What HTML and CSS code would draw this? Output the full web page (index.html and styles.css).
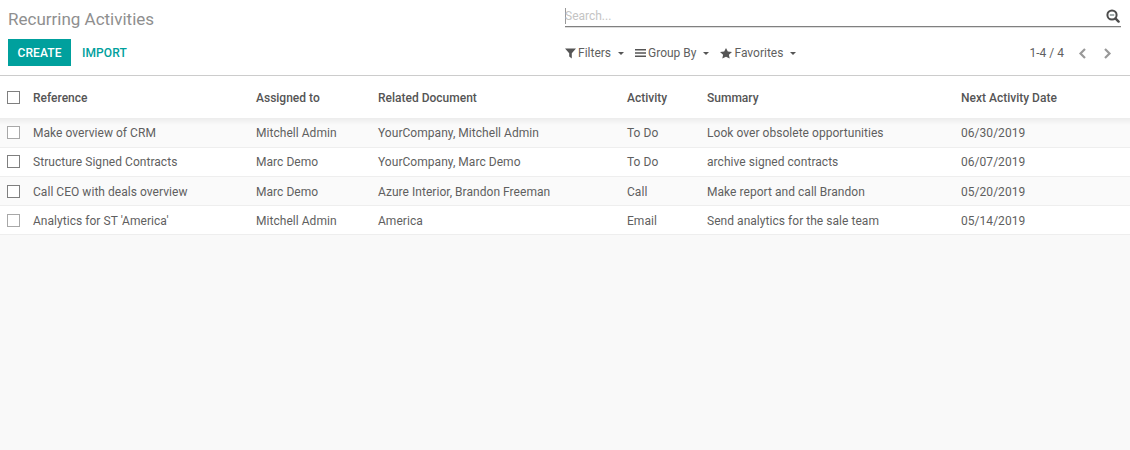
FILE: index.html
```html
<!DOCTYPE html>
<html>
  <head>
    <title>Recurring Activities</title>
    <link rel="stylesheet" href="styles.css">
  </head>
  <body>
    <div class="control-panel">
      <div class="cp-left">
        <h1 class="title">Recurring Activities</h1>
        <div class="buttons">
          <button class="btn-create">CREATE</button>
          <button class="btn-import">IMPORT</button>
        </div>
      </div>
      <div class="cp-right">
        <div class="search">
          <span class="search-input">Search...</span>
          <svg class="search-icon" width="14" height="14" viewBox="0 0 14 14">
            <circle cx="6" cy="6" r="4.6" fill="none" stroke="#4c4c4c" stroke-width="2"/>
            <path d="M3.8 6h4.4" stroke="#7a8a8a" stroke-width="1.4"/>
            <path d="M9.4 9.4l3.2 3.2" stroke="#4c4c4c" stroke-width="2.4" stroke-linecap="round"/>
          </svg>
        </div>
        <div class="tools">
          <div class="filters">
            <span class="filter">
              <svg width="11" height="11" viewBox="0 0 11 11"><path d="M0 0.500h11L6.800 5.300V10.500L4.200 8.500V5.300z" fill="#555"/></svg>
              Filters<i class="caret"></i>
            </span>
            <span class="filter">
              <svg width="11" height="11" viewBox="0 0 11 11"><path d="M0 1h11v1.600H0zM0 4.200h11v1.600H0zM0 7.400h11v1.600H0z" fill="#555"/></svg>
              Group By<i class="caret"></i>
            </span>
            <span class="filter">
              <svg width="12" height="11" viewBox="0 0 12 11"><path d="M6 0l1.800 3.500 4.200.5-3.100 2.700.8 3.900L6 8.700 2.300 10.600l.8-3.900L0 4l4.200-.5z" fill="#555"/></svg>
              Favorites<i class="caret"></i>
            </span>
          </div>
          <div class="pager">
            <span class="pager-text">1-4 / 4</span>
            <svg width="9" height="12" viewBox="0 0 9 12"><path d="M7 1L2.500 5.500 7 10" fill="none" stroke="#999" stroke-width="2.200"/></svg>
            <svg width="9" height="12" viewBox="0 0 9 12"><path d="M2 1L6.500 5.500 2 10" fill="none" stroke="#999" stroke-width="2.200"/></svg>
          </div>
        </div>
      </div>
    </div>

    <table class="list">
      <thead>
        <tr>
          <th class="col-check"><span class="check"></span></th>
          <th class="col-ref">Reference</th>
          <th class="col-user">Assigned to</th>
          <th class="col-doc">Related Document</th>
          <th class="col-act">Activity</th>
          <th class="col-sum">Summary</th>
          <th>Next Activity Date</th>
        </tr>
      </thead>
      <tbody>
        <tr>
          <td><span class="check check-light"></span></td>
          <td>Make overview of CRM</td>
          <td>Mitchell Admin</td>
          <td>YourCompany, Mitchell Admin</td>
          <td>To Do</td>
          <td>Look over obsolete opportunities</td>
          <td>06/30/2019</td>
        </tr>
        <tr>
          <td><span class="check"></span></td>
          <td>Structure Signed Contracts</td>
          <td>Marc Demo</td>
          <td>YourCompany, Marc Demo</td>
          <td>To Do</td>
          <td>archive signed contracts</td>
          <td>06/07/2019</td>
        </tr>
        <tr>
          <td><span class="check"></span></td>
          <td>Call CEO with deals overview</td>
          <td>Marc Demo</td>
          <td>Azure Interior, Brandon Freeman</td>
          <td>Call</td>
          <td>Make report and call Brandon</td>
          <td>05/20/2019</td>
        </tr>
        <tr>
          <td><span class="check check-light"></span></td>
          <td>Analytics for ST 'America'</td>
          <td>Mitchell Admin</td>
          <td>America</td>
          <td>Email</td>
          <td>Send analytics for the sale team</td>
          <td>05/14/2019</td>
        </tr>
      </tbody>
    </table>
  </body>
</html>
```

FILE: styles.css
```css
html, body {
  height: 100%;
}
body {
  margin: 0;
  background-color: #f9f9f9;
  font-family: Roboto, "Liberation Sans", sans-serif;
  font-size: 12px;
  color: #5f5f5f;
  overflow: hidden;
}

.control-panel {
  display: flex;
  height: 75px;
  background-color: white;
  border-bottom: 1px solid #ccc;
}
.cp-left {
  width: 565px;
  padding-left: 8px;
  box-sizing: border-box;
}
.cp-right {
  flex: 1;
  padding-right: 9px;
}
.title {
  margin: 0;
  padding-top: 9px;
  height: 39px;
  box-sizing: border-box;
  font-size: 17px;
  line-height: 21px;
  font-weight: normal;
  color: #8f8f8f;
}
.buttons {
  display: flex;
}
.btn-create {
  width: 63px;
  height: 27px;
  border: 0;
  background-color: #00a09d;
  color: white;
  font: 500 12px Roboto, sans-serif;
  letter-spacing: 0.1px;
  padding: 0;
}
.btn-import {
  height: 27px;
  border: 0;
  background: none;
  color: #00a09d;
  font: 500 12px Roboto, sans-serif;
  letter-spacing: 0.1px;
  padding: 0 0 0 11px;
}

.search {
  display: flex;
  justify-content: space-between;
  align-items: center;
  height: 27px;
  box-sizing: border-box;
  padding-top: 6px;
  border-bottom: 1px solid #808080;
  box-shadow: 0 1px 0 #ddd;
}
.search-input {
  color: #c4c4c4;
  border-left: 1px solid #999;
  line-height: 16px;
  text-indent: -1px;
}
.search-icon {
  margin-right: 1px;
}
.tools {
  display: flex;
  justify-content: space-between;
  padding-top: 19px;
}
.filters {
  display: flex;
  gap: 11px;
}
.filter {
  display: flex;
  align-items: center;
  gap: 2px;
  line-height: 15px;
}
.caret {
  width: 0;
  height: 0;
  margin-left: 5px;
  border-left: 3.5px solid transparent;
  border-right: 3.5px solid transparent;
  border-top: 3.5px solid #555;
}
.pager {
  display: flex;
  align-items: center;
  gap: 16px;
  padding-right: 9px;
}
.pager-text {
  margin-right: -2px;
  line-height: 15px;
}

.list {
  width: 100%;
  border-collapse: collapse;
  table-layout: fixed;
  background-color: white;
}
.list th {
  height: 42px;
  padding: 2px 0 0 3px;
  box-sizing: border-box;
  text-align: left;
  font-weight: 500;
  color: #555;
  background-color: white;
}
.list td {
  height: 29px;
  padding: 1px 0 0 3px;
  border-bottom: 1px solid #eee;
  box-sizing: border-box;
  letter-spacing: 0.04px;
}
.list tbody tr:nth-child(odd) {
  background-color: #fafafa;
}
.list tbody tr:first-child td {
  background: linear-gradient(#ececec, #fafafa 7px);
}
.list tbody tr:nth-child(n+3) td {
  padding-top: 2px;
}
.col-check {
  width: 30px;
}
.col-ref {
  width: 223px;
}
.col-user {
  width: 122px;
}
.col-doc {
  width: 249px;
}
.col-act {
  width: 80px;
}
.col-sum {
  width: 254px;
}
.list thead th:first-child {
  padding: 0 0 0 7px;
}
.list tbody td:first-child {
  padding: 0 0 0 7px;
}
.list tbody tr:nth-child(n+3) td:first-child {
  padding-top: 1px;
}
.check {
  display: block;
  width: 13px;
  height: 13px;
  box-sizing: border-box;
  border: 1px solid #7f7f7f;
  background-color: white;
}
.check-light {
  border-color: #a8a8a8;
}
```
